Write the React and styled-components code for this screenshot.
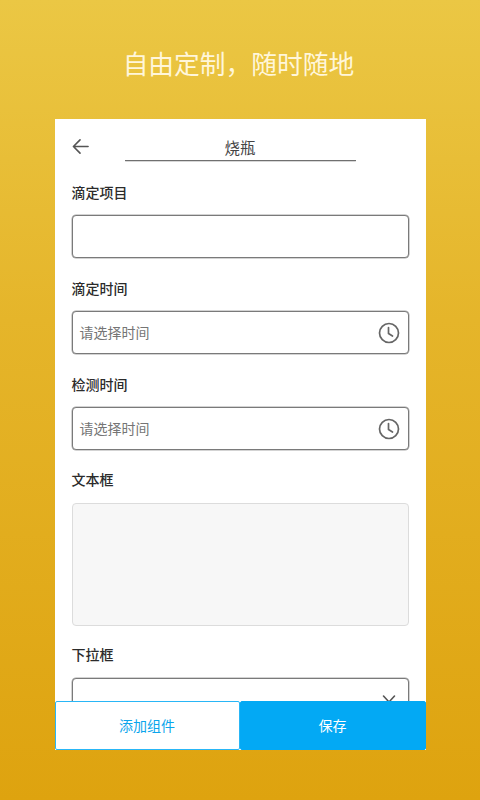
import React from "react";
import styled, { createGlobalStyle } from "styled-components";

const Global = createGlobalStyle`
  html, body { margin: 0; padding: 0; }
  body { font-family: "Noto Sans CJK SC", "Noto Sans", sans-serif; }
  * { box-sizing: border-box; }
`;

const Page = styled.div`
  width: 480px;
  height: 800px;
  overflow: hidden;
  display: flex;
  flex-direction: column;
  align-items: center;
  background: linear-gradient(180deg, #ebc744 0%, #e5b52a 40%, #dea30f 100%);
`;

const Headline = styled.h1`
  margin: 0 3px 0 0;
  height: 119px;
  padding-top: 44px;
  font-size: 25.75px;
  line-height: 38px;
  font-weight: 400;
  color: #fff6da;
  white-space: nowrap;
`;

const Card = styled.div`
  position: relative;
  width: 371px;
  height: 631px;
  background: #fff;
  overflow: hidden;
`;

const Scroll = styled.div`
  display: flex;
  flex-direction: column;
  padding: 0 16.5px 0 17px;
`;

const TitleRow = styled.div`
  display: flex;
  align-items: flex-start;
  height: 42px;
`;

const Back = styled.svg`
  flex: none;
  width: 17px;
  height: 17px;
  margin-top: 19px;
  color: #555;
`;

const Title = styled.div`
  margin: 17px 0 0 36px;
  width: 231px;
  height: 25px;
  border-bottom: 1px solid #707070;
  box-shadow: 0 0.6px 0.6px -0.2px #b0b0b0;
  font-size: 15.5px;
  line-height: 22px;
  text-align: center;
  color: #444;
`;

const Label = styled.div`
  font-size: 14px;
  line-height: 20px;
  font-weight: 500;
  color: #2b2b2b;
  margin-top: ${(p) => p.$top}px;
`;

const Field = styled.div`
  display: flex;
  align-items: center;
  justify-content: space-between;
  height: 43px;
  margin-top: ${(p) => p.$gap || 13}px;
  padding: 0 8px 1px 7px;
  border: 1px solid #7a7a7a;
  box-shadow: 0 0 0 0.5px #a8a8a8;
  border-radius: 4px;
  background: #fff;
  font-size: 14px;
  color: #757575;
`;

const Area = styled.div`
  height: 123px;
  margin-top: 14px;
  border: 1px solid #dcdcdc;
  border-radius: 4px;
  background: #f7f7f7;
`;

const Clock = styled.svg`
  width: 22px;
  height: 22px;
  margin-top: 1px;
  color: #666;
`;

const Chevron = styled.svg`
  width: 16px;
  height: 16px;
  margin-left: auto;
  margin-right: 3px;
  color: #555;
`;

const Footer = styled.div`
  position: absolute;
  left: 0;
  right: 0;
  bottom: 0;
  display: flex;
  height: 49px;
`;

const FooterButton = styled.button`
  flex: 0 0 ${(p) => (p.$primary ? 186 : 185)}px;
  height: 49px;
  padding: 0 0 2px;
  border: 1px solid ${(p) => (p.$primary ? "#03a9f4" : "#29b6f6")};
  border-radius: 2px;
  background: ${(p) => (p.$primary ? "#03a9f4" : "#fff")};
  color: ${(p) => (p.$primary ? "#fff" : "#0ba5ec")};
  font-family: inherit;
  font-size: 14px;
`;

const ClockIcon = () => (
  <Clock viewBox="0 0 22 22" fill="none" stroke="currentColor" strokeWidth="1.7" strokeLinecap="round" strokeLinejoin="round">
    <circle cx="11" cy="11" r="9.5" />
    <path d="M10.5 5.5v6l4 2.5" />
  </Clock>
);

export default function App() {
  return (
    <Page>
      <Global />
      <Headline>自由定制，随时随地</Headline>
      <Card>
        <Scroll>
          <TitleRow>
            <Back viewBox="0 0 18 18" fill="none" stroke="currentColor" strokeWidth="1.7" strokeLinecap="round" strokeLinejoin="round">
              <path d="M17 9H1.5M8.5 2L1.5 9l7 7" />
            </Back>
            <Title>烧瓶</Title>
          </TitleRow>
          <Label $top={21}>滴定项目</Label>
          <Field />
          <Label $top={20}>滴定时间</Label>
          <Field>
            请选择时间
            <ClockIcon />
          </Field>
          <Label $top={20}>检测时间</Label>
          <Field>
            请选择时间
            <ClockIcon />
          </Field>
          <Label $top={19}>文本框</Label>
          <Area />
          <Label $top={18}>下拉框</Label>
          <Field $gap={14}>
            <Chevron viewBox="0 0 16 16" fill="none" stroke="currentColor" strokeWidth="1.6" strokeLinecap="round" strokeLinejoin="round">
              <path d="M2.5 5L8 11l5.5-6" />
            </Chevron>
          </Field>
        </Scroll>
        <Footer>
          <FooterButton>添加组件</FooterButton>
          <FooterButton $primary>保存</FooterButton>
        </Footer>
      </Card>
    </Page>
  );
}
